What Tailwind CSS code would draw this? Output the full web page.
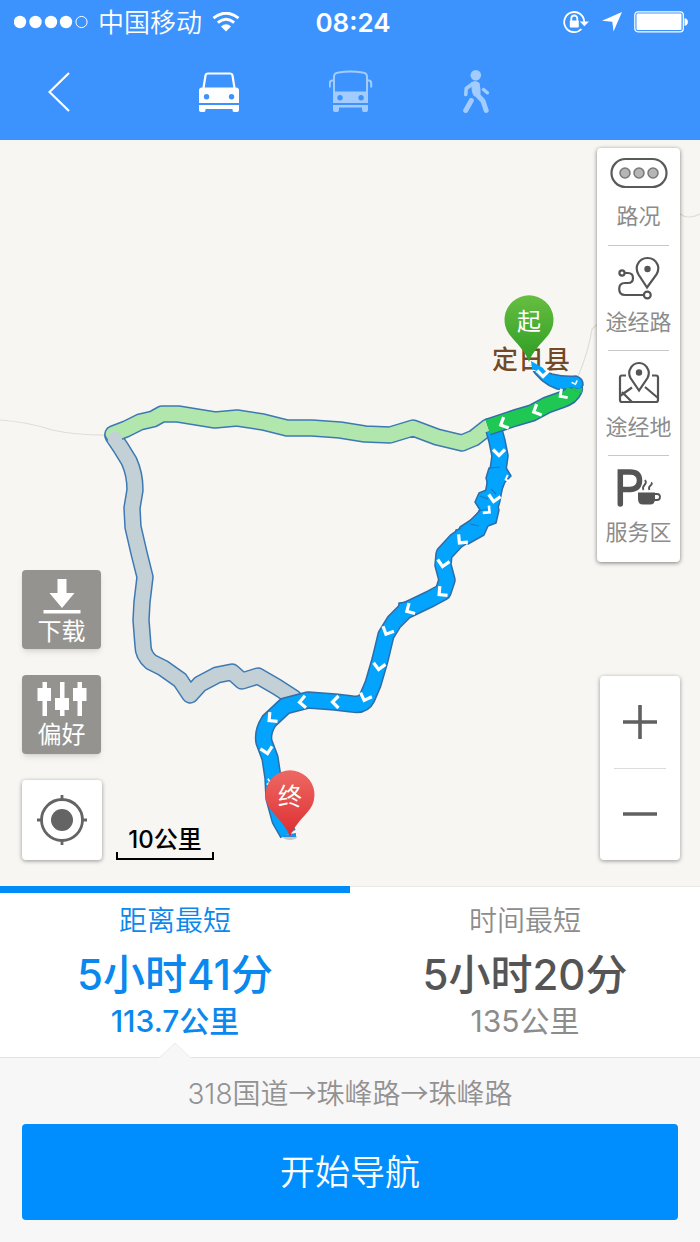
<!DOCTYPE html>
<html lang="zh-CN">
<head>
<meta charset="utf-8">
<meta name="viewport" content="width=device-width, initial-scale=1">
<title>路线规划</title>
<script src="https://cdn.jsdelivr.net/npm/@tailwindcss/browser@4"></script>
</head>
<body class="flex min-h-screen flex-col bg-[#f7f7f7] font-['Inter','Noto_Sans_CJK_SC',sans-serif] text-[#888]">

<header class="bg-[#3c93fd] text-white">
  <div class="grid h-11 grid-cols-[1fr_auto_1fr] items-center pr-3 pl-3.5 text-[26px] leading-none">
    <div class="flex items-center gap-2.5">
      <svg class="h-4 w-[74px]" viewBox="0 0 74 16" fill="currentColor" aria-label="信号">
        <circle cx="6" cy="8" r="6.2"/><circle cx="21.5" cy="8" r="6.2"/><circle cx="37" cy="8" r="6.2"/><circle cx="52" cy="8" r="6.2"/>
        <circle cx="67.500" cy="8" r="5.600" fill="none" stroke="currentColor"/>
      </svg>
      <span class="pt-0.5 font-[350]">中国移动</span>
      <svg class="h-5 w-7" viewBox="0 0 28 20" fill="none" stroke="currentColor" stroke-width="3" aria-label="无线网络">
        <path d="M1.500 6.200Q14 -3.800 26.500 6.200M5.800 10.600Q14 4 22.200 10.600"/>
        <path d="M9 14.400Q14 10.200 19 14.400L14 19.500Z" fill="currentColor" stroke="none"/>
      </svg>
    </div>
    <time class="pt-0.5 pl-1 font-semibold">08:24</time>
    <div class="flex items-center justify-end gap-3">
      <svg class="h-6 w-7" viewBox="0 0 28 24" fill="none" stroke="currentColor" stroke-width="1.800" aria-label="方向锁定">
        <path d="M22.200 12A10 10 0 1 0 19.400 19"/>
        <path d="M17.800 11.500H27L22.400 16.300Z" fill="currentColor" stroke="none"/>
        <path d="M9.300 11V8.500a3 3 0 0 1 6 0V11"/><rect x="7.800" y="10.500" width="9" height="7" rx=".8" fill="currentColor" stroke="none"/>
      </svg>
      <svg class="h-5 w-5" viewBox="0 0 20 20" fill="currentColor" aria-label="定位"><path d="M20 0L11.500 19.500L10.300 9.800L0 8.800Z"/></svg>
      <svg class="h-[22px] w-[54px]" viewBox="0 0 54 22" fill="currentColor" aria-label="电量">
        <rect x=".8" y=".8" width="48.500" height="20" rx="3" fill="none" stroke="currentColor" stroke-width="1.200"/>
        <rect x="2.500" y="2.500" width="45" height="16.600" rx="1"/><path d="M50.500 7.200c4.500 0 4.500 7.500 0 7.500Z"/>
      </svg>
    </div>
  </div>
  <nav class="flex h-24 items-center pl-12" aria-label="出行方式">
    <button class="mr-[129px]" aria-label="返回">
      <svg class="h-10 w-[22px]" viewBox="0 0 22 40" fill="none" stroke="currentColor" stroke-width="2.200"><path d="M21 1L1.500 20L21 39"/></svg>
    </button>
    <div class="flex items-center gap-[90px]">
      <button aria-label="驾车" aria-pressed="true">
        <svg class="h-11 w-10" viewBox="0 0 40 44" fill="currentColor">
          <path d="M4.500 18L6.500 5.500Q7 3.500 9 3.500H31Q33 3.500 33.500 5.500L35.500 18" fill="none" stroke="currentColor" stroke-width="2.200"/>
          <path fill-rule="evenodd" d="M3 17.500H37Q40 17.500 40 20.500V33H0V20.500Q0 17.500 3 17.500ZM7.500 24a2.700 2.700 0 1 0 .1 5.400a2.700 2.700 0 0 0-.1-5.400ZM32.500 24a2.700 2.700 0 1 0 .1 5.400a2.700 2.700 0 0 0-.1-5.400Z"/>
          <path d="M0 35H40V40Q40 42 38 42H35Q33.500 42 33.500 40V39H6.500V40Q6.500 42 5 42H2Q0 42 0 40Z"/>
        </svg>
      </button>
      <button class="text-[#a3ccfe]" aria-label="公交" aria-pressed="false">
        <svg class="h-11 w-11" viewBox="0 0 44 44" fill="currentColor">
          <path d="M5 23V6Q5.500 2.800 9.500 2.400Q21.500 .6 33.500 2.400Q37.500 2.800 38 6V23M.8 17.500V13Q.8 10.500 4.500 10.300M42.200 17.500V13Q42.200 10.500 38.500 10.300" fill="none" stroke="currentColor" stroke-width="2"/>
          <path fill-rule="evenodd" d="M4 21.500H39V33H4ZM11 25a2.700 2.700 0 1 0 .1 5.400a2.700 2.700 0 0 0-.1-5.400ZM32 25a2.700 2.700 0 1 0 .1 5.400a2.700 2.700 0 0 0-.1-5.400Z"/>
          <path d="M4 35H39V40Q39 42 37 42H35Q33 42 33 40V37.500H10V40Q10 42 8 42H6Q4 42 4 40Z"/>
        </svg>
      </button>
      <button class="text-[#a3ccfe]" aria-label="步行" aria-pressed="false">
        <svg class="h-11 w-[26px]" viewBox="0 0 26 44" fill="none" stroke="currentColor" stroke-linecap="round" stroke-linejoin="round">
          <circle cx="12.800" cy="5.300" r="5.300" fill="currentColor" stroke="none"/>
          <path d="M9 12.500Q12.500 10.500 16 13Q17.500 20 17 24.500L11.500 26Q8.500 23 9 12.500Z" fill="currentColor" stroke-width="1"/>
          <path d="M10 13.500L3.200 18.500L2.800 24.500" stroke-width="3.600"/>
          <path d="M20.500 19.500L24.300 22.800" stroke-width="3.400"/>
          <path d="M13.500 24L20 31L23.200 40.500M8.300 30.500L2.700 40.500" stroke-width="5"/>
        </svg>
      </button>
    </div>
  </nav>
</header>

<main class="relative flex min-h-[746px] flex-1 overflow-hidden bg-[#f8f6f3]">
  <svg class="absolute inset-0 h-full w-full" viewBox="0 140 700 746" preserveAspectRatio="xMidYMid slice" fill="none" stroke-linejoin="round" aria-label="路线地图">
    <defs>
      <linearGradient id="startFill" x2="0" y2="1"><stop stop-color="#66be41"/><stop offset="1" stop-color="#2d9d24"/></linearGradient>
      <linearGradient id="endFill" x2="0" y2="1"><stop stop-color="#ed6963"/><stop offset="1" stop-color="#dd2d31"/></linearGradient>
      <path id="pin" d="M0 0C-3 -10 -12 -18 -20 -28A24.500 24.500 0 1 1 20 -28C12 -18 3 -10 0 0Z"/>
      <path id="arrow" d="M-6 -3.500L0 2.500L6 -3.500" stroke="#fff" stroke-width="3.200" stroke-linejoin="miter"/>
      <path id="grey" d="M113 436L121 448L129 461Q135 474 135 490L132 508L133 527L139 553L145 577L142 602L141 620L143 646Q143 655 151 662L163 668L180 680L190 695L200 684L217 675L232 672L242 681L258 676L277 687L294 698"/>
      <path id="mint" d="M113 434L126 429L140 422L153 419L162 414L178 414L215 420L237 418L263 422L287 428L312 428L340 430L365 434L390 435L413 428L437 437L462 443L474 438L488 427"/>
      <path id="main" d="M494 430L497 441L500 456L498 470L495 484L492 500L488 514L472 530L456 541L444 554L443 565L447 580L443 592L430 599L405 611L394 622L386 635L380 660L373 684L367 698Q363 706 352 704L335 702L308 700L285 706L269 721Q262 732 264 742L270 758L273 778L274 798L280 820L288 834"/>
      <path id="green" d="M574 390Q571 397 561 400L547 405L532 413L515 418L488 427"/>
    </defs>
    <g stroke="#deddd6" stroke-width="1.200">
      <path d="M0 420Q28 422 52 430Q80 436 113 435M578 376Q588 354 592 329L600 322M680 214Q688 220 700 214"/>
    </g>
    <g stroke-linecap="round">
      <use href="#grey" stroke="#3d79b3" stroke-width="17.500"/><use href="#grey" stroke="#c3d0d6" stroke-width="14.500"/>
      <use href="#mint" stroke="#3d79b3" stroke-width="17.500"/><use href="#mint" stroke="#b1e6ad" stroke-width="14.500"/>
      <circle cx="115" cy="439" r="7.200" fill="#c3d0d6"/>
    </g>
    <g fill="#02a4fd" stroke="#2f6da9" stroke-width="1.500">
      <use href="#main" stroke-width="17.500" fill="none"/>
      <path d="M489 468L486 478L489 489L479 493L475 502L480 510L474 518L460 527L456 536L468 544L484 535L488 526L496 523L499 510L496 500L501 492L505 482L511 476L508 471L505 466Z"/>
      <path d="M452 548L456 530L466 528ZM398 613L399 603L408 602Z"/>
    </g>
    <use href="#main" stroke="#02a4fd" stroke-width="14.500"/>
    <path d="M480 496l8 3M490 468l10 -1M470 524l9 2M478 511l9 -2M491 489l5 5" stroke="#1c76c4" stroke-width="1.200"/>
    <circle cx="574" cy="389" r="8.700" fill="#1ec853" stroke="#2f6da9"/>
    <use href="#green" stroke="#2f6da9" stroke-width="17.500"/>
    <path d="M530 366L541 370L552 374Q564 377 576 376Q583 378 583 385Q580 390 574 387Q567 390 557 389Q540 383 530 366Z" fill="#02a4fd" stroke="#2f6da9" stroke-width="1.500"/>
    <use href="#green" stroke="#1ec853" stroke-width="14.500"/>
    <path d="M567 386Q571 375 579 378Q584 384 580 389Z" fill="#02a4fd"/>
    <g class="font-['Noto_Sans_CJK_SC',sans-serif] font-medium" font-size="26" text-anchor="middle">
      <text x="531" y="369" fill="#734a28" stroke="#fbf8f3" stroke-width="3" paint-order="stroke">定日县</text>
    </g>
    <path d="M531 361L543 368L548 376L532 369Z" fill="#02a4fd"/>
    <use href="#arrow" transform="translate(543 374)"/>
    <use href="#arrow" transform="translate(575 383) rotate(-20) scale(.5)"/>
    <use href="#arrow" transform="translate(562 395) rotate(55) scale(.9)"/>
    <use href="#arrow" transform="translate(536 411) rotate(65)"/>
    <use href="#arrow" transform="translate(503 424) rotate(65)"/>
    <use href="#arrow" transform="translate(499 453)"/>
    <use href="#arrow" transform="translate(507 479) rotate(70) scale(.6)"/>
    <use href="#arrow" transform="translate(494 499) rotate(10)"/>
    <use href="#arrow" transform="translate(488 511) rotate(-50) scale(.8)"/>
    <use href="#arrow" transform="translate(461 541) rotate(40)"/>
    <use href="#arrow" transform="translate(443 564) rotate(10)"/>
    <use href="#arrow" transform="translate(441 593) rotate(50)"/>
    <use href="#arrow" transform="translate(409 610) rotate(60)"/>
    <use href="#arrow" transform="translate(387 632) rotate(25)"/>
    <use href="#arrow" transform="translate(379 667) rotate(8)"/>
    <use href="#arrow" transform="translate(365 698) rotate(20)"/>
    <use href="#arrow" transform="translate(335 702) rotate(90)"/>
    <use href="#arrow" transform="translate(302 702) rotate(85)"/>
    <use href="#arrow" transform="translate(271 719) rotate(50)"/>
    <use href="#arrow" transform="translate(267 751) rotate(-12)"/>
    <use href="#arrow" transform="translate(269 782) rotate(-80) scale(.5)"/>
    <ellipse cx="290" cy="837" rx="7" ry="3" fill="#c5c9cc"/>
    <path d="M283 835L296 833V837H283Z" fill="#1e90e6"/>
    <use href="#pin" x="529" y="362" fill="url(#startFill)"/>
    <use href="#pin" x="290" y="837" fill="url(#endFill)"/>
    <g fill="#fff" font-size="24" text-anchor="middle" class="font-['Noto_Sans_CJK_SC',sans-serif]">
      <text x="529" y="330">起</text><text x="290" y="805">终</text>
    </g>
  </svg>

  <div class="relative flex w-full justify-between pt-2 pr-5 pb-[26px] pl-[22px]">
    <div class="flex items-end gap-3.5">
      <div class="flex flex-col gap-[26px]">
        <button class="flex h-[79px] w-[79px] flex-col items-center rounded-sm bg-[#949390] pt-2 text-2xl leading-9 text-white shadow-md">
          <svg class="h-9 w-10 shrink-0" viewBox="0 0 40 36" fill="currentColor"><path d="M15.500 1H24.500V15H32.500L20 30L7.500 15H15.500ZM1.500 32H38.500V35.500H1.500Z"/></svg>
          下载
        </button>
        <button class="flex h-[79px] w-[79px] flex-col items-center rounded-sm bg-[#949390] pt-1.5 text-2xl leading-9 text-white shadow-md">
          <svg class="h-9 w-[50px] shrink-0" viewBox="0 0 50 36" fill="currentColor"><path d="M5.500 1H10V7H14V20H10V35H5.500V20H.5V7H5.500ZM23 1H27.500V17H32V29H27.500V35H23V29H18V17H23ZM40.500 1H45V7H49.500V20H45V35H40.500V20H36V7H40.500Z"/></svg>
          偏好
        </button>
        <button class="flex h-20 w-20 items-center justify-center rounded-sm bg-white text-[#646464] shadow-[0_1px_4px_rgba(0,0,0,0.4)]" aria-label="定位到当前位置">
          <svg class="h-[50px] w-[50px]" viewBox="0 0 50 50" fill="none" stroke="currentColor" stroke-width="2.800"><circle cx="25" cy="25" r="20.500"/><circle cx="25" cy="25" r="11" fill="currentColor" stroke="none"/><path d="M25 0V6M25 44V50M0 25H6M44 25H50"/></svg>
        </button>
      </div>
      <div class="flex w-[98px] flex-col items-center text-2xl leading-6 font-medium text-black">
        <span>10公里</span>
        <span class="h-2 w-full border-x-2 border-b-2 border-black"></span>
      </div>
    </div>

    <div class="flex flex-col items-end justify-between">
      <div class="flex w-[83px] flex-col divide-y divide-[#c8c8c8] rounded-sm bg-white px-[11px] pb-1 text-[22px] leading-8 whitespace-nowrap text-[#8c8c8c] shadow-[0_1px_4px_rgba(0,0,0,0.5)]">
        <button class="flex h-[98px] flex-col items-center gap-2.5 pt-2">
          <svg class="h-[34px] w-[58px] shrink-0" viewBox="0 0 58 34" fill="#b5b5b5" stroke="#5a5a5a"><rect x="1.500" y="3" width="55" height="28" rx="14" fill="#fff" stroke-width="2.200"/><g stroke="#777" stroke-width="1.500"><circle cx="15" cy="17" r="5"/><circle cx="29" cy="17" r="5"/><circle cx="43" cy="17" r="5"/></g></svg>
          <span>路况</span>
        </button>
        <button class="flex h-[105px] flex-col items-center gap-1.5 pt-2.5">
          <svg class="h-11 w-[42px] shrink-0" viewBox="0 0 42 44" fill="none" stroke="#555" stroke-width="2.200"><circle cx="4" cy="17" r="2.600"/><path d="M6.600 17H10Q15 17 15 22T10 27H7Q1.200 27 1.200 33T7 39H25.500M29 31.500L20.500 18.500Q17.500 13 19.500 8.500Q22.500 2 29.500 2T39.500 8.500Q41.500 13 38.500 18.500L29 31.500Z"/><circle cx="29.500" cy="13" r="3.200" fill="#555" stroke="none"/><circle cx="29.300" cy="39" r="3.400"/></svg>
          <span>途经路</span>
        </button>
        <button class="flex h-[105px] flex-col items-center gap-1.5 pt-2.5">
          <svg class="h-11 w-[42px] shrink-0" viewBox="0 0 42 44" fill="none" stroke="#555" stroke-width="2.200"><path d="M8 14.500H4Q2 14.500 2 16.500V39Q2 41 4 41H38Q40 41 40 39V16.500Q40 14.500 38 14.500H34M2 35L14 26.500M4 31L14 41M27 26L40 37"/><path d="M21 29.500L12.500 17Q10 12 12.200 8Q15 2 21 2T29.800 8Q32 12 29.500 17Z"/><circle cx="21" cy="11.500" r="3.200" fill="#555" stroke="none"/></svg>
          <span>途经地</span>
        </button>
        <button class="flex h-[102px] flex-col items-center gap-1.5 pt-2.5">
          <svg class="h-11 w-11 shrink-0" viewBox="0 0 44 44" fill="#555"><path d="M3.300 38V6H13Q22.500 6 22.500 14.500T13 23.500H4" fill="none" stroke="#555" stroke-width="5.500" stroke-linecap="round"/><path d="M21 26.500H38V33Q38 38.500 33 38.500H26Q21 38.500 21 33Z"/><path d="M37 28H40Q43 28 43 31T40 34H37M26.500 24Q25 21.500 27.500 19T28 14M32.500 24Q31 21.500 33.500 19.500T34 16.500" fill="none" stroke="#555" stroke-width="1.800"/></svg>
          <span>服务区</span>
        </button>
      </div>
      <div class="flex h-[184px] w-20 flex-col divide-y divide-[#ddd] rounded-sm bg-white px-[14px] text-[#606060] shadow-[0_1px_4px_rgba(0,0,0,0.4)]">
        <button class="flex flex-1 items-center justify-center" aria-label="放大"><svg class="h-9 w-9" viewBox="0 0 36 36" stroke="currentColor" stroke-width="3.600"><path d="M1 18H35M18 1V35"/></svg></button>
        <button class="flex flex-1 items-center justify-center" aria-label="缩小"><svg class="h-9 w-9" viewBox="0 0 36 36" stroke="currentColor" stroke-width="3.600"><path d="M1 18H35"/></svg></button>
      </div>
    </div>
  </div>
</main>

<section class="grid h-[172px] grid-cols-2 border-b border-[#e2e2e2] bg-white text-[28px] leading-10" aria-label="路线方案">
  <button class="relative flex flex-col items-center justify-start border-t-[7px] border-[#008cf8] pt-2 text-[#0a88ee]" aria-pressed="true">
    <span class="font-[350]">距离最短</span>
    <strong class="mt-2 text-[42px] leading-[52px] font-medium">5小时41分</strong>
    <span class="text-[30px] font-medium">113.7公里</span>
    <svg class="absolute -bottom-px left-1/2 h-4 w-8 -translate-x-1/2" viewBox="0 0 32 16" fill="#f7f7f7" stroke="#ebebeb" aria-hidden="true"><path d="M0 16L16 1L32 16"/></svg>
  </button>
  <button class="flex flex-col items-center justify-start border-t border-[#ebe9e6] pt-3.5 text-[#8c8c8c]" aria-pressed="false">
    <span class="font-[350]">时间最短</span>
    <strong class="mt-2 text-[42px] leading-[52px] font-medium text-[#555]">5小时20分</strong>
    <span class="text-[30px]">135公里</span>
  </button>
</section>

<footer class="flex flex-col px-[22px] pt-3.5 pb-6 text-center">
  <p class="text-[28px] leading-10 font-[350] text-[#929292]">318国道<span class="font-['Noto_Sans_CJK_SC',sans-serif]">→</span>珠峰路<span class="font-['Noto_Sans_CJK_SC',sans-serif]">→</span>珠峰路</p>
  <button class="mt-2.5 h-24 rounded-sm bg-[#008eff] text-[35px] font-[350] text-white">开始导航</button>
</footer>
</body>
</html>
